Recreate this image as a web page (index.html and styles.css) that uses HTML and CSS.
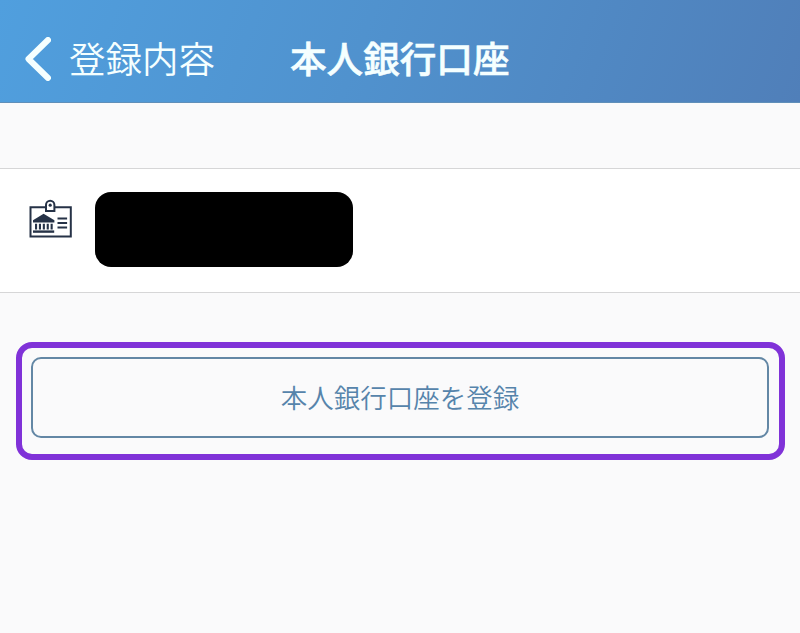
FILE: index.html
```html
<!DOCTYPE html>
<html lang="ja">
<head>
  <meta charset="UTF-8">
  <meta name="viewport" content="width=device-width, initial-scale=1.0">
  <title>本人銀行口座</title>
  <link rel="stylesheet" href="styles.css">
</head>
<body>
  <header class="navbar">
    <div class="back">
      <svg class="back-arrow" viewBox="0 0 26 44">
        <path d="M23 3 L3.5 22 L23 41"/>
      </svg>
      <span>登録内容</span>
    </div>
    <h1 class="title">本人銀行口座</h1>
  </header>

  <section class="account-row">
    <svg class="bank-icon" viewBox="0 0 44 40">
      <!-- card -->
      <path class="line" d="M17.5 8.3 H2.5 V37.6 H42.8 V8.3 H27"/>
      <path class="line" d="M18 12 V5.9 A4.2 4.2 0 0 1 26.4 5.9 V12 Z"/>
      <circle cx="22.2" cy="6.2" r="1.6"/>
      <!-- bank -->
      <path d="M5 21.3 L15.6 14.8 L26.4 21.3 V23.4 H5 Z"/>
      <path d="M7 24.8h2.1v5.6h-2.1z M10.9 24.8h2.1v5.6h-2.1z M14.8 24.8h2.1v5.6h-2.1z M18.7 24.8h2.1v5.6h-2.1z M22.6 24.8h2.1v5.6h-2.1z"/>
      <path d="M5 31.4h21.2v2.4h-21.2z"/>
      <path class="text-line" d="M29.5 19.5h9.6 M29.5 24h9.6 M29.5 28.5h9.6"/>
    </svg>
    <div class="mask"></div>
  </section>

  <div class="highlight">
    <button class="register" type="button">本人銀行口座を登録</button>
  </div>
</body>
</html>
```

FILE: styles.css
```css
* {
  box-sizing: border-box;
}
body {
  margin: 0;
  background-color: #fafafb;
  font-family: "Noto Sans CJK JP", sans-serif;
}

.navbar {
  display: flex;
  align-items: center;
  height: 103px;
  padding: 16px 0 0 25px;
  background: linear-gradient(110deg, #509fde 0%, #5092ce 45%, #507fb9 100%);
  border-bottom: 1px solid #608fb9;
  color: #f5ffff;
}
.back {
  display: flex;
  align-items: center;
  width: 265px;
  font-size: 36.5px;
  font-weight: 350;
  line-height: 50px;
}
.back span {
  padding-bottom: 3px;
}
.back-arrow {
  width: 26px;
  height: 44px;
  margin-right: 18px;
  fill: none;
  stroke: #f5ffff;
  stroke-width: 6;
  stroke-linecap: round;
  stroke-linejoin: round;
}
.title {
  margin: 0;
  padding-bottom: 2px;
  font-size: 36.6px;
  font-weight: 500;
  line-height: 50px;
  -webkit-text-stroke: 0.6px #f5ffff;
}

.account-row {
  display: flex;
  align-items: flex-start;
  height: 125px;
  margin-top: 65px;
  padding: 23.4px 28px;
  background-color: #fff;
  border-top: 1px solid #d6d6d7;
  border-bottom: 1px solid #d6d6d7;
}
.bank-icon {
  width: 44px;
  height: 40px;
  margin: 6.6px 23px 0 0;
  fill: #263247;
}
.bank-icon .line {
  fill: none;
  stroke: #263247;
  stroke-width: 2;
}
.bank-icon .text-line {
  stroke: #263247;
  stroke-width: 2;
}
.mask {
  width: 258px;
  height: 75px;
  background-color: #000;
  border-radius: 16px;
}

.highlight {
  height: 118px;
  margin: 49px 15px 0 16px;
  padding: 9px;
  border: 6px solid #8032d8;
  border-radius: 16px;
}
.register {
  display: block;
  width: 738px;
  height: 81px;
  padding: 0 0 3px;
  background-color: transparent;
  border: 2px solid #6387a5;
  border-radius: 10px;
  color: #5684ab;
  font-family: inherit;
  font-size: 26.5px;
  font-weight: 350;
}
```
